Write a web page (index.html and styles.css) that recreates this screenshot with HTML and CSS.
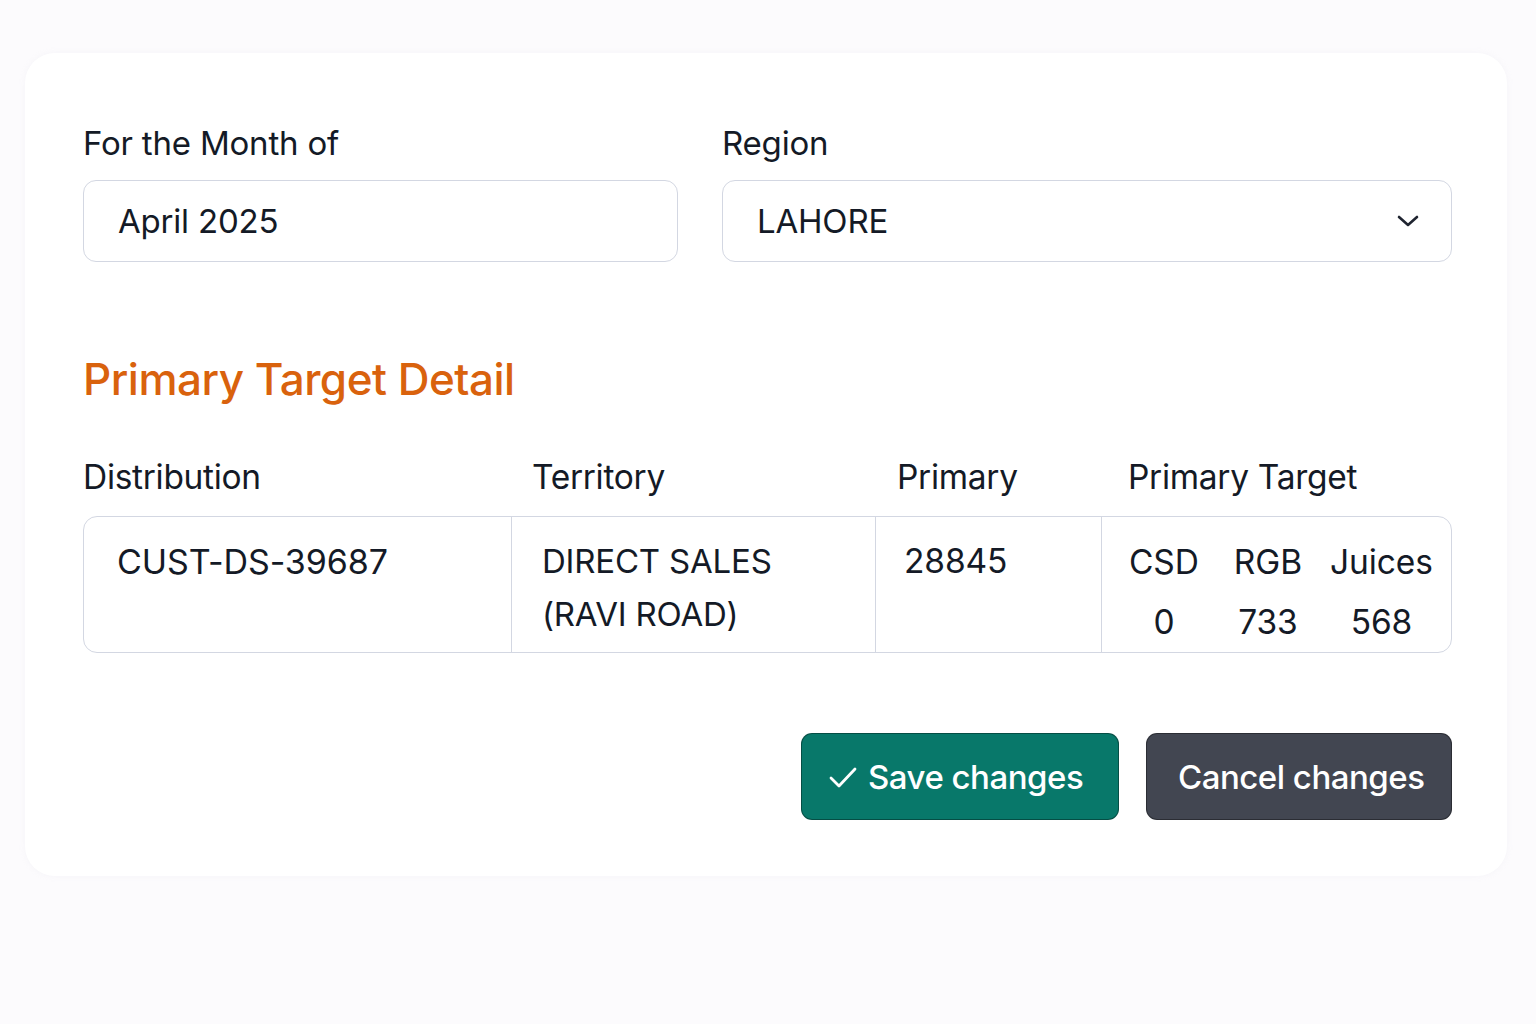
FILE: index.html
```html
<!DOCTYPE html>
<html lang="en">
<head>
<meta charset="utf-8">
<title>Primary Target Detail</title>
<link rel="stylesheet" href="styles.css">
</head>
<body>
<main class="card">
  <section class="filters">
    <div class="field">
      <label class="label">For the Month of</label>
      <div class="input">April 2025</div>
    </div>
    <div class="field">
      <label class="label">Region</label>
      <div class="input select">
        <span>LAHORE</span>
        <svg class="chev" width="22" height="14" viewBox="0 0 22 14"><path d="M2 3 L11 11 L20 3" fill="none" stroke="#1f2430" stroke-width="2.6" stroke-linecap="round" stroke-linejoin="round"/></svg>
      </div>
    </div>
  </section>

  <h2 class="title">Primary Target Detail</h2>

  <div class="thead">
    <div class="th th-first">Distribution</div>
    <div class="th th-terr">Territory</div>
    <div class="th th-prim">Primary</div>
    <div class="th th-target">Primary Target</div>
  </div>
  <div class="tbody">
    <div class="td td-first">CUST-DS-39687</div>
    <div class="td td-terr">DIRECT SALES<br>(RAVI ROAD)</div>
    <div class="td td-prim">28845</div>
    <div class="td td-target">
      <div class="sub"><span>CSD</span><span>0</span></div>
      <div class="sub"><span>RGB</span><span>733</span></div>
      <div class="sub sub-last"><span>Juices</span><span>568</span></div>
    </div>
  </div>

  <div class="actions">
    <button class="btn btn-save">
      <svg width="30" height="24" viewBox="0 0 30 24"><path d="M3 13 L11 21 L27 4" fill="none" stroke="#fff" stroke-width="2.8" stroke-linecap="round" stroke-linejoin="round"/></svg>
      Save changes
    </button>
    <button class="btn btn-cancel">Cancel changes</button>
  </div>
</main>
</body>
</html>
```

FILE: styles.css
```css
* { box-sizing: border-box; }
html, body { margin: 0; padding: 0; }
body {
  background: #fcfbfd;
  font-family: Inter, "Noto Sans", "Liberation Sans", sans-serif;
  color: #141a26;
  padding: 53px 29px 149px 25px;
}
.card {
  background: #ffffff;
  border-radius: 30px;
  padding: 70px 55px 56px 58px;
  min-height: 822px;
  box-shadow: 0 0 6px rgba(200, 195, 215, 0.12);
}
.filters {
  display: grid;
  grid-template-columns: 595px 1fr;
  column-gap: 44px;
}
.field { display: flex; flex-direction: column; }
.label {
  font-size: 33px;
  line-height: 40px;
  margin-bottom: 17px;
  letter-spacing: -0.2px;
}
.input {
  height: 82px;
  border: 1.5px solid #d3d7e2;
  border-radius: 13px;
  padding: 0 34px;
  display: flex;
  align-items: center;
  font-size: 33px;
  letter-spacing: -0.2px;
}
.select { justify-content: space-between; padding-right: 32px; }
.chev { display: block; }
.title {
  margin: 89px 0 0;
  font-size: 44px;
  line-height: 56px;
  font-weight: 500;
  color: #d9620d;
  letter-spacing: -0.5px;
}
.thead, .tbody {
  display: grid;
  grid-template-columns: 427px 364px 226px 1fr;
}
.thead {
  margin-top: 46px;
  height: 63px;
  align-items: start;
  padding-top: 4px;
}
.th { font-size: 33.5px; line-height: 40px; letter-spacing: -0.3px; }
.th-terr { padding-left: 22px; }
.th-prim { padding-left: 23px; }
.th-target { padding-left: 28px; }
.tbody {
  border: 1.5px solid #d3d7e2;
  border-radius: 14px;
  height: 137px;
}
.td {
  font-size: 33.5px;
  line-height: 53px;
  padding-top: 18px;
  letter-spacing: -0.1px;
}
.td + .td { border-left: 1.5px solid #d3d7e2; }
.td-first { padding-left: 33px; font-size: 34px; }
.td-terr { padding-left: 30px; font-size: 33px; letter-spacing: -0.2px; }
.td-prim { padding-left: 28px; }
.td-target {
  display: flex;
  gap: 35px;
  padding-left: 27px;
  padding-top: 15px;
}
.sub {
  display: flex;
  flex-direction: column;
  align-items: center;
  line-height: 60px;
}
.sub-last { margin-left: -7px; }
.actions {
  display: flex;
  justify-content: flex-end;
  gap: 27px;
  margin-top: 80px;
}
.btn {
  height: 87px;
  border: 1px solid rgba(0,0,0,0.35);
  border-radius: 11px;
  color: #fff;
  font-family: Inter, "Noto Sans", "Liberation Sans", sans-serif;
  font-size: 33px;
  font-weight: 500;
  letter-spacing: -0.5px;
  display: flex;
  align-items: center;
  gap: 10px;
}
.btn-save { background: #08786a; padding: 0 32px 0 26px; width: 318px; }
.btn-cancel { background: #424651; padding: 0 26px 0 31px; width: 306px; }
```
